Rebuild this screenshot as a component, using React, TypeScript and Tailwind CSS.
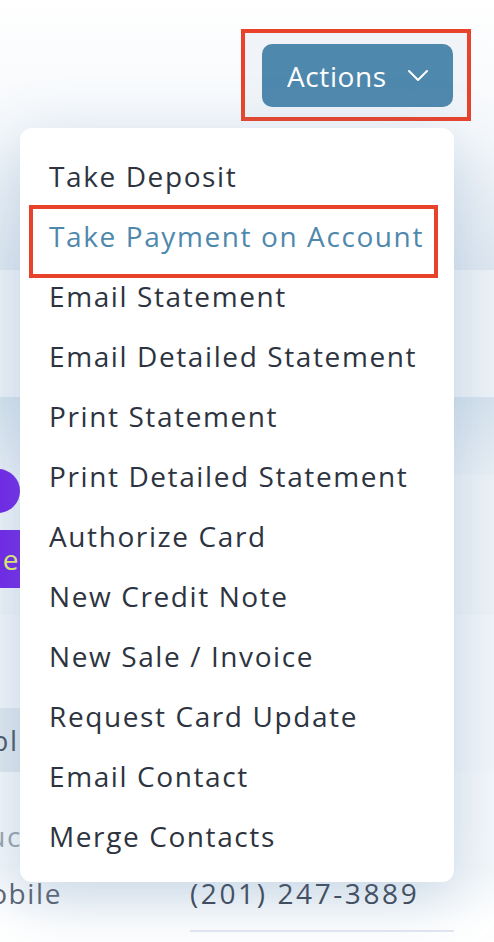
import React from "react";

const items = [
  "Take Deposit",
  "Take Payment on Account",
  "Email Statement",
  "Email Detailed Statement",
  "Print Statement",
  "Print Detailed Statement",
  "Authorize Card",
  "New Credit Note",
  "New Sale / Invoice",
  "Request Card Update",
  "Email Contact",
  "Merge Contacts",
];

export default function App() {
  return (
    <div
      className="relative w-[494px] h-[942px] overflow-hidden bg-white text-[#2d3440] tracking-[1.6px]"
      style={{ fontFamily: '"Open Sans", "Noto Sans", sans-serif' }}
    >
      {/* underlying page */}
      <div className="flex flex-col">
        <div className="h-[270px] bg-gradient-to-b from-white via-[#f5f8fb] to-[#dfe8f1]" />
        <div className="h-[127px] bg-[#eef3f8]" />
        <div className="h-[78px] bg-gradient-to-b from-[#d7e3ee] to-[#eaf0f6]" />
        <div className="relative h-[140px] bg-[#eef3f8]">
          <div className="absolute -left-[24px] -top-[6px] w-[44px] h-[44px] rounded-full bg-[#7022e8]" />
          <div className="absolute left-0 top-[55px] h-[58px] w-[40px] bg-[#7022e8] flex items-center justify-end pr-[20px]">
            <span className="text-[28px] text-[#e4f06a] leading-none whitespace-nowrap">Sale</span>
          </div>
        </div>
        <div className="h-[93px] bg-[#f2f6fa]" />
        <div className="h-[64px] bg-[#f2f6fa] flex items-center">
          <div className="h-full w-[60px] bg-[#dfe7ef] flex items-center justify-end pr-[24px]">
            <span className="text-[28px] text-[#4b5563] leading-none whitespace-nowrap">Payable</span>
          </div>
        </div>
        <div className="h-[90px] bg-[#f5f8fb] flex items-start pt-[50px]">
          <div className="w-[22px] flex justify-end">
            <span className="text-[28px] text-[#9aa3ad] leading-none whitespace-nowrap">Educ</span>
          </div>
        </div>
        <div className="h-[62px] bg-gradient-to-b from-[#f3f7fa] to-white flex items-center">
          <div className="w-[62px] flex justify-end">
            <span className="text-[28px] text-[#5a6270] leading-none whitespace-nowrap">Mobile</span>
          </div>
          <span className="ml-[128px] text-[28px] text-[#3b4250] leading-none whitespace-nowrap tracking-[2.6px]">(201) 247-3889</span>
        </div>
        <div className="h-[6px] bg-white" />
        <div className="h-[2px] ml-[190px] w-[264px] bg-[#e2e8f0]" />
        <div className="h-[12px] bg-white" />
      </div>

      {/* Actions button */}
      <div className="absolute left-[241px] top-[29px] w-[230px] h-[92px] border-[4px] border-[#e8432a] bg-[#f0f4f8]" />
      <button className="absolute left-[262px] top-[44px] w-[191px] h-[63px] rounded-[10px] bg-[#4f88ad] text-white flex items-center pl-[25px] tracking-[0.6px]">
        <span className="text-[28px] leading-none" style={{ fontFamily: '"Open Sans", sans-serif' }}>Actions</span>
        <svg className="ml-[20px]" width="22" height="14" viewBox="0 0 22 14" fill="none">
          <path d="M2 2 L11 11 L20 2" stroke="white" strokeWidth="2" strokeLinecap="round" strokeLinejoin="round" />
        </svg>
      </button>

      {/* dropdown */}
      <div className="absolute left-[20px] top-[128px] w-[434px] rounded-[12px] bg-white pt-[18px] pb-[16px] shadow-[0_16px_60px_rgba(110,150,190,0.35)]">
        {items.map((t, i) => (
          <div
            key={t}
            className={`h-[60px] flex items-center pl-[29px] text-[28px] leading-none whitespace-nowrap ${
              i === 1 ? "text-[#4f88ad]" : "text-[#2d3440]"
            }`}
          >
            {t}
          </div>
        ))}
      </div>

      <div className="absolute left-[29px] top-[205px] w-[409px] h-[73px] border-[4px] border-[#e8432a]" />
    </div>
  );
}
